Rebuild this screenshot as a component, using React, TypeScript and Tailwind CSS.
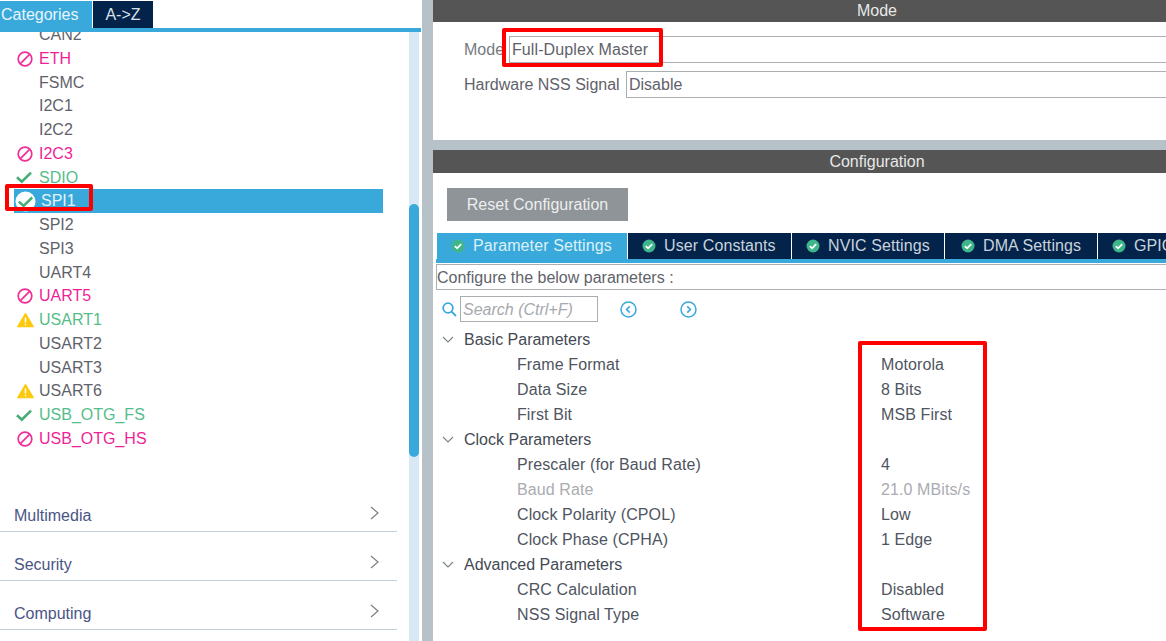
import React from 'react';

type Status = 'none' | 'ban' | 'check' | 'warn' | 'selected';

const peripherals: { name: string; status: Status; color: string }[] = [
  { name: 'ETH', status: 'ban', color: 'text-[#ee1f96]' },
  { name: 'FSMC', status: 'none', color: 'text-[#5f626a]' },
  { name: 'I2C1', status: 'none', color: 'text-[#5f626a]' },
  { name: 'I2C2', status: 'none', color: 'text-[#5f626a]' },
  { name: 'I2C3', status: 'ban', color: 'text-[#ee1f96]' },
  { name: 'SDIO', status: 'check', color: 'text-[#55bd8a]' },
  { name: 'SPI1', status: 'selected', color: 'text-[#e4f3fb]' },
  { name: 'SPI2', status: 'none', color: 'text-[#5f626a]' },
  { name: 'SPI3', status: 'none', color: 'text-[#5f626a]' },
  { name: 'UART4', status: 'none', color: 'text-[#5f626a]' },
  { name: 'UART5', status: 'ban', color: 'text-[#ee1f96]' },
  { name: 'USART1', status: 'warn', color: 'text-[#55bd8a]' },
  { name: 'USART2', status: 'none', color: 'text-[#5f626a]' },
  { name: 'USART3', status: 'none', color: 'text-[#5f626a]' },
  { name: 'USART6', status: 'warn', color: 'text-[#5f626a]' },
  { name: 'USB_OTG_FS', status: 'check', color: 'text-[#55bd8a]' },
  { name: 'USB_OTG_HS', status: 'ban', color: 'text-[#ee1f96]' },
];

const tabs = [
  { label: 'Parameter Settings', cls: 'w-[190px] pl-[14px]', active: true },
  { label: 'User Constants', cls: 'w-[163px] pl-[14px]', active: false },
  { label: 'NVIC Settings', cls: 'w-[152px] pl-[14px]', active: false },
  { label: 'DMA Settings', cls: 'w-[152px] pl-[16px]', active: false },
  { label: 'GPIO Settings', cls: 'w-[152px] pl-[14px]', active: false },
];

const params = [
  { title: 'Basic Parameters' },
  { label: 'Frame Format', value: 'Motorola' },
  { label: 'Data Size', value: '8 Bits' },
  { label: 'First Bit', value: 'MSB First' },
  { title: 'Clock Parameters' },
  { label: 'Prescaler (for Baud Rate)', value: '4' },
  { label: 'Baud Rate', value: '21.0 MBits/s', disabled: true },
  { label: 'Clock Polarity (CPOL)', value: 'Low' },
  { label: 'Clock Phase (CPHA)', value: '1 Edge' },
  { title: 'Advanced Parameters' },
  { label: 'CRC Calculation', value: 'Disabled' },
  { label: 'NSS Signal Type', value: 'Software' },
];

const StatusIcon = ({ status }: { status: Status }) => {
  if (status === 'ban') {
    return (
      <svg width="16" height="16" viewBox="0 0 16 16" fill="none" stroke="#ee2f98" strokeWidth="1.7" className="ml-[3px]">
        <circle cx="8" cy="8" r="6.8" />
        <path d="M3.4 12.6 12.6 3.4" />
      </svg>
    );
  }
  if (status === 'check') {
    return (
      <svg width="16" height="16" viewBox="0 0 16 16" fill="none" stroke="#43ad74" strokeWidth="2.6" className="ml-[2px]">
        <path d="M1 8.2 5.8 12.6 15 3.6" />
      </svg>
    );
  }
  if (status === 'warn') {
    return (
      <svg width="17" height="16" viewBox="0 0 17 16" className="ml-[3px]">
        <path d="M8.5 1.2 16.6 14.8H.4Z" fill="#fdc90b" stroke="#fdc90b" strokeLinejoin="round" />
        <path d="M8.5 5.5v5M8.5 11.8v1.4" stroke="#fff" strokeWidth="1.5" />
      </svg>
    );
  }
  if (status === 'selected') {
    return (
      <svg width="21" height="21" viewBox="0 0 22 22" fill="none" className="ml-[1px]">
        <circle cx="11" cy="11" r="10.5" fill="#fff" />
        <path d="M4 11.2 9 15.6 18 6.8" stroke="#43ad74" strokeWidth="2.6" />
      </svg>
    );
  }
  return null;
};

const TabCheck = () => (
  <svg width="14" height="14" viewBox="0 0 14 14" fill="none" className="shrink-0">
    <circle cx="7" cy="7" r="6.5" fill="#3fb58a" />
    <path d="M3.8 7.1 6.1 9.3 10.2 5.1" stroke="#fff" strokeWidth="1.8" />
  </svg>
);

const CircleNav = ({ dir }: { dir: 'left' | 'right' }) => (
  <svg width="17" height="17" viewBox="0 0 17 17" fill="none" stroke="#39a9dc">
    <circle cx="8.5" cy="8.5" r="7.5" strokeWidth="1.5" />
    <path d={dir === 'left' ? 'M9.8 5.4 6.6 8.5 9.8 11.6' : 'M7.2 5.4 10.4 8.5 7.2 11.6'} strokeWidth="1.6" />
  </svg>
);

const Accordion = ({ label }: { label: string }) => (
  <div className="h-[49px] flex items-end justify-between border-b border-[#c3d0d8] pb-[4px] pl-[14px] pr-[18px]">
    <span className="text-[16px] leading-[22px] text-[#4a5585]">{label}</span>
    <svg width="9" height="14" viewBox="0 0 9 14" fill="none" stroke="#7c7f84" strokeWidth="1.2" className="mb-[7px]">
      <path d="M1 1 8 7 1 13" />
    </svg>
  </div>
);

export default function App() {
  return (
    <div className="relative w-[1166px] h-[641px] overflow-hidden flex bg-white font-['Liberation_Sans',Arial,sans-serif]">
      {/* Left categories panel */}
      <div className="w-[422px] shrink-0 flex flex-col">
        <div className="pt-[1px] flex gap-[1px] h-[28px]">
          <div className="w-[92px] h-[27px] bg-[#39a9dc] text-[#e8f5fb] text-[16px] leading-[27px] pl-[1px]">Categories</div>
          <div className="w-[60px] h-[27px] bg-[#03234b] text-[#d9e2ea] text-[16px] leading-[27px] text-center">A-&gt;Z</div>
        </div>
        <div className="h-[4px] bg-[#39a9dc] mr-[1px]" />
        <div className="flex-1 flex min-h-0">
          <div className="w-[397px] shrink-0 flex flex-col">
            <div className="h-[446px] overflow-hidden">
              <div className="-mt-[9px] pl-[39px] h-[23.75px] text-[16px] leading-[23.75px] text-[#5f626a]">CAN2</div>
              {peripherals.map((p) => (
                <div
                  key={p.name}
                  className={`h-[23.75px] flex items-center ml-[14px] w-[369px] ${p.status === 'selected' ? 'bg-[#39a9dc]' : ''}`}
                >
                  <div className="w-[25px] shrink-0 flex justify-start">
                    <StatusIcon status={p.status} />
                  </div>
                  <span className={`text-[16px] leading-[23.75px] ${p.color} ${p.status === 'selected' ? 'pl-[2px]' : ''}`}>{p.name}</span>
                </div>
              ))}
            </div>
            <div className="mt-[5px]">
              <Accordion label="Multimedia" />
              <Accordion label="Security" />
              <Accordion label="Computing" />
            </div>
          </div>
          <div className="ml-[12px] w-[10px] bg-[#d8e8f5]">
            <div className="mt-[172px] h-[253px] rounded-full bg-[#39a9dc]" />
          </div>
        </div>
      </div>

      {/* Divider */}
      <div className="w-[11px] shrink-0 bg-[#b6c1c8]" />

      {/* Right panel */}
      <div className="w-[888px] shrink-0 flex flex-col">
        <div className="h-[22px] bg-[#545554] text-center text-[16px] leading-[22px] text-[#e8e8e8]">Mode</div>
        <div className="h-[118px] pl-[31px] pt-[14px] flex flex-col gap-[8px]">
          <div className="flex items-center h-[27px] text-[16px] text-[#5f626a]">
            <span className="w-[45px] text-[#777a80]">Mode</span>
            <div className="flex-1 h-[27px] border border-r-0 border-[#a9aeb2] leading-[25px] tracking-[0.1px] pl-[2px]">Full-Duplex Master</div>
          </div>
          <div className="flex items-center h-[27px] text-[16px] text-[#5f626a]">
            <span className="w-[162px]">Hardware NSS Signal</span>
            <div className="flex-1 h-[27px] border border-r-0 border-[#a9aeb2] leading-[25px] pl-[2px]">Disable</div>
          </div>
        </div>
        <div className="h-[10px] bg-[#b6c1c8]" />
        <div className="h-[23px] bg-[#545554] text-center text-[16px] leading-[23px] text-[#e8e8e8]">Configuration</div>

        <div className="pl-[14px] pt-[15px]">
          <div className="w-[181px] h-[33px] bg-[#8f9498] text-[#eceeef] text-[16px] leading-[33px] text-center">Reset Configuration</div>
        </div>

        {/* Tabs */}
        <div className="pl-[4px] mt-[12px] flex gap-[1px]">
          {tabs.map((t) => (
            <div
              key={t.label}
              className={`${t.cls} shrink-0 h-[26px] flex items-center gap-[8px] text-[16px] tracking-[0.1px] ${t.active ? 'bg-[#39a9dc] text-[#dcf0f9]' : 'bg-[#03234b] text-[#c9d3dc]'}`}
            >
              <TabCheck />
              <span>{t.label}</span>
            </div>
          ))}
        </div>
        <div className="h-[4px] ml-[3px] bg-[#39a9dc]" />

        <div className="mt-[1px] ml-[3px] h-[26px] border border-r-0 border-[#a9aeb2] text-[16px] leading-[26px] text-[#5f626a]">
          Configure the below parameters :
        </div>

        {/* Search row */}
        <div className="mt-[6px] pl-[9px] h-[26px] flex items-center">
          <svg width="15" height="15" viewBox="0 0 15 15" fill="none" stroke="#39a9dc" strokeWidth="1.8" className="shrink-0 mr-[3px]">
            <circle cx="6" cy="6" r="4.8" />
            <path d="M9.6 9.6 14 14" />
          </svg>
          <div className="w-[138px] h-[26px] border border-[#a9aeb2] pl-[2px] text-[16px] leading-[26px] italic text-[#a6a9ad]">Search (Ctrl+F)</div>
          <div className="ml-[22px]"><CircleNav dir="left" /></div>
          <div className="ml-[43px]"><CircleNav dir="right" /></div>
        </div>

        {/* Parameter tree */}
        <div className="mt-[5px] pl-[9px]">
          {params.map((p, i) =>
            p.title ? (
              <div key={i} className="h-[25px] flex items-center text-[16px] text-[#444a54]">
                <div className="w-[22px] shrink-0">
                  <svg width="12" height="7" viewBox="0 0 12 7" fill="none" stroke="#7c7f84" strokeWidth="1.1">
                    <path d="M1 1 6 6 11 1" />
                  </svg>
                </div>
                <span>{p.title}</span>
              </div>
            ) : (
              <div key={i} className={`h-[25px] flex items-center text-[16px] tracking-[0.1px] ${p.disabled ? 'text-[#aaacb0]' : 'text-[#4f555f]'}`}>
                <span className="ml-[75px] w-[364px]">{p.label}</span>
                <span>{p.value}</span>
              </div>
            ),
          )}
        </div>
      </div>

      {/* Red annotation boxes */}
      <div className="absolute left-[5px] top-[184px] w-[88px] h-[27px] border-[4px] border-[#fe0000] rounded-[2px]" />
      <div className="absolute left-[502px] top-[28px] w-[161px] h-[39px] border-[4px] border-[#fe0000] rounded-[2px]" />
      <div className="absolute left-[858px] top-[341px] w-[129px] h-[290px] border-[4px] border-[#fe0000] rounded-[2px]" />
    </div>
  );
}
